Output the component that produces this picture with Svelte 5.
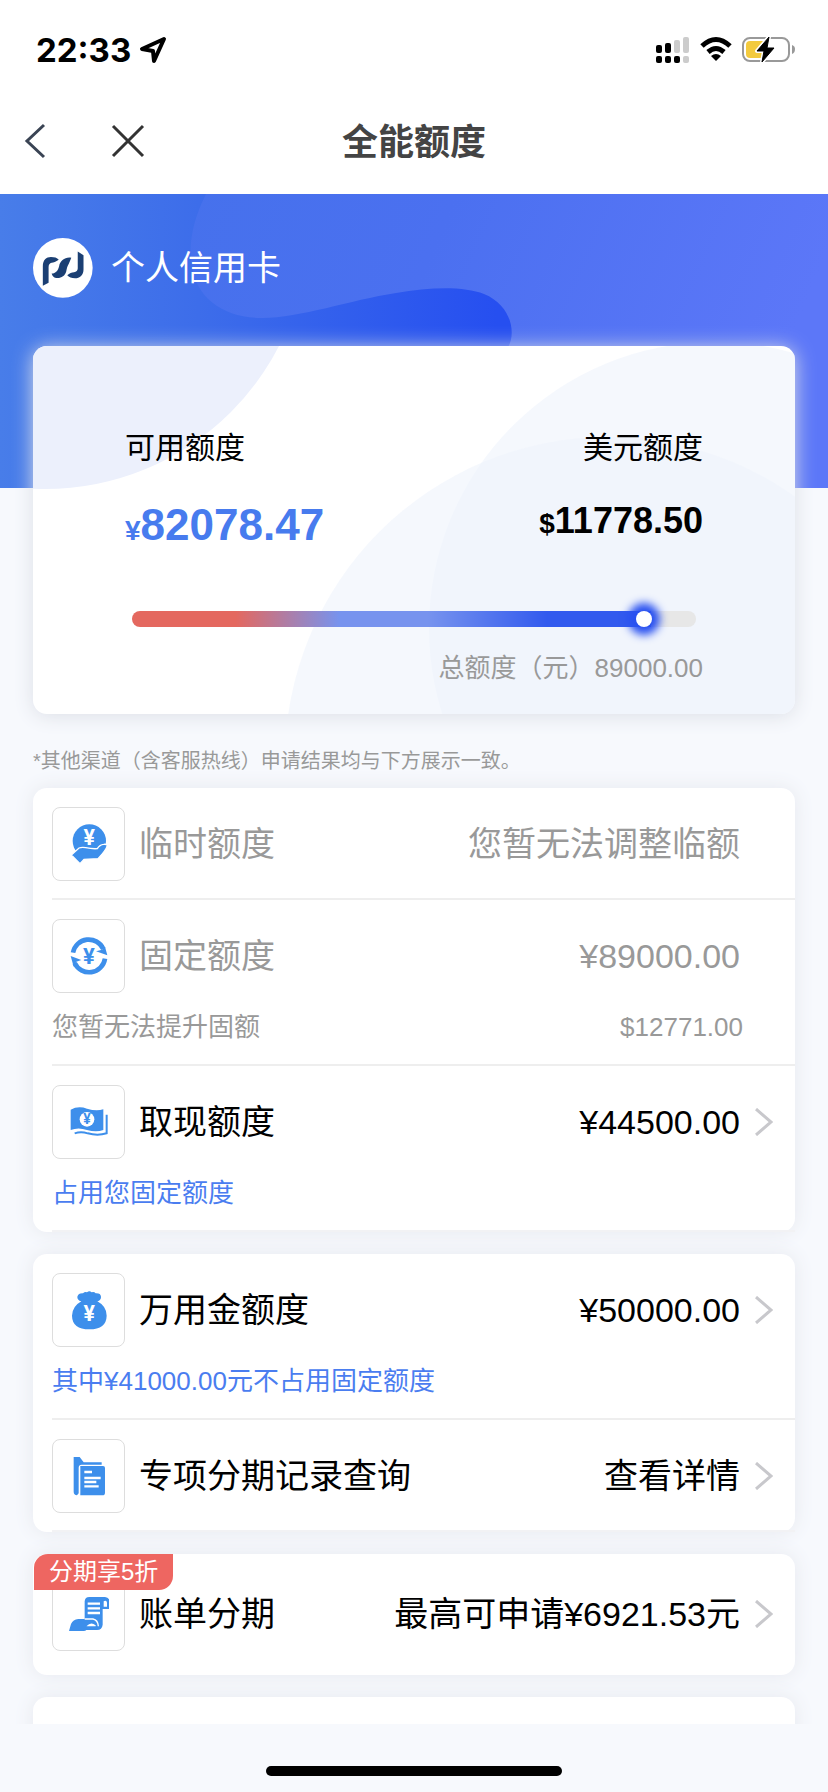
<script>
	const available = 82078.47;
	const total = 89000;
	const filled = Math.floor((available / total) * 100);

	const groups = [
		{
			items: [
				{ icon: 'hand', name: '临时额度', value: '您暂无法调整临额', muted: true },
				{
					icon: 'cycle',
					name: '固定额度',
					value: '¥89000.00',
					muted: true,
					note: '您暂无法提升固额',
					extra: '$12771.00'
				},
				{ icon: 'cash', name: '取现额度', value: '¥44500.00', note: '占用您固定额度' }
			]
		},
		{
			items: [
				{
					icon: 'bag',
					name: '万用金额度',
					value: '¥50000.00',
					note: '其中¥41000.00元不占用固定额度'
				},
				{ icon: 'folder', name: '专项分期记录查询', value: '查看详情' }
			]
		},
		{
			badge: '分期享5折',
			items: [{ icon: 'bill', name: '账单分期', value: '最高可申请¥6921.53元' }]
		}
	];
</script>

{#snippet icon(name)}
	<svg class="icon" viewBox="0 0 120 120" aria-hidden="true">
		{#if name === 'hand'}
			<circle cx="61" cy="51" r="50" />
			<text class="yen white" x="61" y="63" font-size="64">¥</text>
			<path
				class="cut"
				d="M7 93 L30 72 Q38 69 50 71 Q68 75 85 74 Q92 62 104 61 Q113 60 115 64 Q112 78 87 104 L45 106 L33 119 Z"
			/>
		{:else if name === 'cycle'}
			<path
				class="ring"
				d="M12 50 A48 48 0 0 1 103 39 M108 68 A48 48 0 0 1 17 81"
			/>
			<path d="M115 58 L81 46 L99 41 L108 32 Z M5 60 L37 72 L22 77 L14 92 Z" />
			<text class="yen" x="60" y="83" font-size="66">¥</text>
		{:else if name === 'cash'}
			<path d="M5 23 Q28 10 54 20 Q82 29 103 22 V84 Q82 92 54 84 Q28 75 5 84 Z" />
			<path class="line" d="M17 94 Q36 88 56 94 Q86 102 113 94 V38" />
			<circle class="white" cx="54" cy="52" r="22" />
			<text class="yen" x="54" y="67" font-size="42">¥</text>
		{:else if name === 'bag'}
			<path
				d="M37 34 Q24 30 25 20 Q28 9 42 10 Q48 4 54 7 Q61 1 68 7 Q75 4 80 10 Q95 9 96 20 Q97 30 85 34 Q113 49 113 77 Q112 118 61 118 Q10 118 9 77 Q10 49 37 34 Z"
			/>
			<text class="yen white" x="61" y="94" font-size="64">¥</text>
		{:else if name === 'folder'}
			<path d="M14 3 H32 L44 19 H98 V26 H38 Q29 26 29 35 V112 L24 118 Q14 117 14 107 Z" />
			<path d="M34 30 H102 Q108 30 108 36 V110 Q108 118 100 118 H34 Z" />
			<path class="slot" d="M46 48 H69 M46 66 H95 M46 78 H82 M46 91 H89" />
		{:else if name === 'bill'}
			<path
				d="M47 22 Q48 9 61 9 H108 Q122 10 122 26 V45 H101 V92 Q99 108 84 108 H52 Q50 111 44 111 H0 L6 90 Q12 76 28 75 H47 Z"
			/>
			<path class="slot" d="M56 29 H93 M56 43 H93 M56 57 H93" />
			<path class="white" d="M104 22 Q111 18 114 25 V38 H104 Z" />
			<path class="gap" d="M47 75 H72 Q87 78 88 97" />
			<path class="white" d="M53 96 Q66 82 80 94 V97 H53 Z" />
		{/if}
	</svg>
{/snippet}

<div class="app">
	<div class="status">
		<div class="clock">
			<span>22:33</span>
			<svg width="28" height="28" viewBox="0 0 28 28" aria-hidden="true">
				<path
					d="M25 3 L3 13 L14 15 L15 25 Z"
					fill="none"
					stroke="#000"
					stroke-width="4"
					stroke-linejoin="round"
				/>
			</svg>
		</div>
		<div class="signals">
			<svg width="34" height="28" viewBox="0 0 34 28" aria-hidden="true">
				<rect x="0" y="9" width="6" height="8" rx="2" />
				<rect x="9" y="7" width="6" height="10" rx="2" />
				<rect x="18" y="4" width="6" height="13" rx="2" fill="#ccc" />
				<rect x="27" y="1" width="6" height="16" rx="2" fill="#ccc" />
				<rect x="0" y="20" width="6" height="7" rx="2" />
				<rect x="9" y="20" width="6" height="7" rx="2" />
				<rect x="18" y="20" width="6" height="7" rx="2" />
				<rect x="27" y="20" width="6" height="7" rx="2" fill="#ccc" />
			</svg>
			<svg width="32" height="28" viewBox="0 0 32 28" aria-hidden="true">
				<g fill="none" stroke="#000" stroke-width="5">
					<path d="M2 10 Q16 -3 30 10" />
					<path d="M8 16 Q16 9 24 16" />
				</g>
				<path d="M11 20 Q16 16 21 20 L16 25 Z" />
			</svg>
			<svg width="54" height="28" viewBox="0 0 54 28" aria-hidden="true">
				<rect x="1" y="2" width="46" height="23" rx="7" fill="none" stroke="#999" stroke-width="2" />
				<path d="M50 9 Q53 10 53 13 Q53 17 50 18 Z" fill="#999" />
				<rect x="4" y="5" width="21" height="17" rx="4" fill="#f3ca3e" />
				<path
					d="M27 1 L15 15 H22 L20 26 L32 12 H25 Z"
					stroke="#fff"
					stroke-width="4"
					stroke-linejoin="round"
				/>
				<path d="M27 1 L15 15 H22 L20 26 L32 12 H25 Z" stroke="#000" stroke-linejoin="round" />
			</svg>
		</div>
	</div>

	<header class="nav">
		<div class="nav-buttons">
			<button type="button" aria-label="返回">
				<svg width="36" height="36" viewBox="0 0 36 36">
					<path d="M20 2 L3 18 L20 34" fill="none" stroke="#3a4454" stroke-width="3" />
				</svg>
			</button>
			<button type="button" aria-label="关闭">
				<svg width="36" height="36" viewBox="0 0 36 36">
					<path d="M3 3 L33 33 M33 3 L3 33" fill="none" stroke="#333" stroke-width="3" />
				</svg>
			</button>
		</div>
		<h1>全能额度</h1>
	</header>

	<main>
		<section class="hero">
			<svg class="waves" viewBox="0 0 828 294" preserveAspectRatio="none" aria-hidden="true">
				<defs>
					<linearGradient id="deep" x1="0" y1="0" x2="1" y2="0">
						<stop offset="0" stop-color="#487de9" />
						<stop offset="0.24" stop-color="#3d6dea" />
						<stop offset="0.6" stop-color="#264ff0" />
					</linearGradient>
					<linearGradient id="light" x1="0" y1="0" x2="1" y2="0.2">
						<stop offset="0" stop-color="#4671ec" />
						<stop offset="0.4" stop-color="#4b70f0" />
						<stop offset="1" stop-color="#5c77f8" />
					</linearGradient>
				</defs>
				<rect width="828" height="294" fill="url(#deep)" />
				<path
					d="M206 0 Q186 40 192 72 C196 104 224 124 262 124 C300 124 350 106 396 99 C430 93 464 92 484 100 C514 112 518 146 504 158 L480 294 H828 V0 Z"
					fill="url(#light)"
				/>
			</svg>
			<div class="owner">
				<svg class="logo" viewBox="9 9 177 177" aria-hidden="true">
					<circle cx="97" cy="97" r="88" fill="#fff" />
					<g fill="#1b3f73">
						<path
							d="M38 150 V92 C38 74 48 65 62 65 C72 65 80 67 85 73 C76 79 70 82 64 82 C58 83 55 88 55 95 V141 Z"
						/>
						<path
							d="M122 67 C119 75 117 78 115 84 C110 92 109 98 107 108 C103 122 91 129 77 127 C70 126 66 121 64 114 C76 113 83 105 86 92 C89 75 104 64 122 67 Z"
						/>
						<path
							d="M141 49 L158 60 V102 C158 119 147 128 133 128 C123 128 115 125 110 119 C117 113 123 110 130 110 C137 109 141 105 141 98 Z"
						/>
					</g>
				</svg>
				<span>个人信用卡</span>
			</div>
		</section>

		<section class="balance">
			<svg class="circles" viewBox="0 0 762 368" preserveAspectRatio="none" aria-hidden="true">
				<circle cx="12" cy="-120" r="263" fill="#ecf0fc" />
				<circle cx="682" cy="282" r="286" fill="#eef3fc" opacity="0.6" />
				<circle cx="575" cy="414" r="323" fill="#eef3fc" opacity="0.6" />
			</svg>
			<div class="amounts">
				<div>
					<p class="caption">可用额度</p>
					<p class="cny"><small>¥</small>82078.47</p>
				</div>
				<div class="right">
					<p class="caption">美元额度</p>
					<p class="usd"><small>$</small>11778.50</p>
				</div>
			</div>
			<input
				class="meter"
				type="range"
				min="0"
				max="100"
				value={filled}
				style="--filled: {filled}%"
				aria-label="可用额度"
			/>
			<p class="total">总额度（元）89000.00</p>
		</section>

		<p class="tip">*其他渠道（含客服热线）申请结果均与下方展示一致。</p>

		{#each groups as group}
			<ul class="group" class:tagged={group.badge}>
				{#if group.badge}
					<li class="badge">{group.badge}</li>
				{/if}
				{#each group.items as item}
					<li class="item" class:muted={item.muted}>
						<svelte:element
							this={item.muted ? 'div' : 'a'}
							class="row"
							href={item.muted ? undefined : '#' + item.icon}
						>
							<span class="icon-box">{@render icon(item.icon)}</span>
							<span class="name">{item.name}</span>
							<span class="value">{item.value}</span>
							<span class="arrow">
								{#if !item.muted}
									<svg width="18" height="28" viewBox="0 0 18 28" aria-hidden="true">
										<path d="M1 1 L16 14 L1 27" fill="none" stroke="#c8c8cc" stroke-width="3" />
									</svg>
								{/if}
							</span>
						</svelte:element>
						{#if item.note}
							<p class="note">
								<span>{item.note}</span>
								{#if item.extra}<span>{item.extra}</span>{/if}
							</p>
						{/if}
					</li>
				{/each}
			</ul>
		{/each}
		<div class="group next"></div>
	</main>

	<footer class="home"><span></span></footer>
</div>

<style>
	:global(body) {
		background: #f7f9fd;
	}

	.app {
		display: flex;
		flex-direction: column;
		height: 100vh;
		font-family: 'Liberation Sans', 'Noto Sans CJK SC', sans-serif;
		color: #000;
	}

	p,
	h1,
	ul {
		margin: 0;
		padding: 0;
		list-style: none;
	}

	.status {
		display: flex;
		flex: none;
		justify-content: space-between;
		align-items: center;
		height: 76px;
		padding: 12px 32px 0 36px;
		background: #fff;
	}

	.clock,
	.signals {
		display: flex;
		align-items: center;
	}

	.clock {
		gap: 8px;
		font: 700 33px/40px Inter, sans-serif;
	}

	.signals {
		gap: 10px;
	}

	.nav {
		display: grid;
		flex: none;
		grid-template-columns: 1fr auto 1fr;
		align-items: center;
		height: 106px;
		padding: 0 24px;
		background: #fff;
	}

	.nav-buttons {
		display: flex;
		gap: 50px;
	}

	button {
		display: flex;
		padding: 0;
		border: none;
		background: none;
	}

	h1 {
		padding-top: 3px;
		font-size: 36px;
		line-height: 48px;
		color: #444;
	}

	main {
		flex: 1;
		min-height: 0;
		overflow-y: auto;
		scrollbar-width: none;
	}

	.hero {
		position: relative;
		padding: 44px 33px 190px;
	}

	.waves,
	.circles {
		position: absolute;
		top: 0;
		left: 0;
		width: 100%;
		height: 100%;
	}

	.owner {
		position: relative;
		display: flex;
		align-items: center;
		gap: 18px;
		font-size: 34px;
		line-height: 60px;
		color: #fff;
	}

	.logo {
		width: 60px;
		height: 60px;
	}

	.balance {
		position: relative;
		margin: -142px 33px 0;
		padding: 82px 92px 28px;
		border-radius: 14px;
		background: #fff;
		box-shadow: 0 2px 20px #dcdfe6;
	}

	.circles {
		border-radius: 14px;
	}

	.amounts,
	.meter,
	.total {
		position: relative;
	}

	.amounts {
		display: flex;
		justify-content: space-between;
	}

	.right,
	.total {
		text-align: right;
	}

	.caption {
		margin-bottom: 31px;
		font-size: 30px;
		line-height: 40px;
	}

	.cny {
		font-size: 44px;
		font-weight: 700;
		line-height: 52px;
		color: #477bee;
	}

	.usd {
		font-size: 36px;
		font-weight: 700;
		line-height: 44px;
	}

	small {
		font-size: 28px;
		line-height: 1;
	}

	.meter {
		display: block;
		width: calc(100% - 14px);
		height: 16px;
		margin: 60px 7px 23px;
		border-radius: 8px;
		appearance: none;
		background:
			linear-gradient(90deg, #e4685f 20%, #7793ee 40%, #7793ee 57%, #325aee 80%) 0 0 / var(--filled)
				100% no-repeat,
			#e7e7e7;
	}

	.meter::-webkit-slider-thumb {
		width: 16px;
		height: 16px;
		border-radius: 50%;
		appearance: none;
		background: #fff;
		box-shadow: 0 0 8px 8px #2850f0;
	}

	.total {
		font-size: 26px;
		line-height: 36px;
		color: #999;
	}

	.tip {
		margin: 32px 33px 12px;
		font-size: 20px;
		line-height: 30px;
		color: #999;
	}

	.group {
		position: relative;
		margin: 0 33px 22px;
		border-radius: 14px;
		background: #fff;
		box-shadow: 0 0 20px #e6e8ee;
	}

	.item {
		margin-left: 19px;
		padding: 19px 0 17px;
		border-bottom: 2px solid #eee;
	}

	.item:last-child {
		border-bottom-color: #f2f2f4;
	}

	.tagged .item {
		padding: 23px 0 24px;
		border-bottom: none;
	}

	.row {
		display: flex;
		align-items: center;
		font-size: 34px;
		line-height: 48px;
		color: #000;
		text-decoration: none;
	}

	.muted .row {
		color: #999;
	}

	.icon-box {
		display: grid;
		box-sizing: border-box;
		width: 73px;
		height: 74px;
		margin-right: 14px;
		border: 1px solid #ddd;
		border-radius: 8px;
		place-items: center;
	}

	.icon {
		width: 40px;
		height: 40px;
		fill: #3d8feb;
	}

	.icon .cut {
		stroke: #fff;
		stroke-width: 4;
	}

	.icon .ring,
	.icon .line,
	.icon .slot,
	.icon .gap {
		fill: none;
		stroke: #3d8feb;
		stroke-width: 14;
	}

	.icon .line {
		stroke-width: 6;
	}

	.icon .slot {
		stroke: #fff;
		stroke-width: 7;
	}

	.icon .gap {
		stroke: #fff;
		stroke-width: 4;
	}

	.icon .white {
		fill: #fff;
	}

	.yen {
		font-family: Roboto, sans-serif;
		font-weight: 700;
		text-anchor: middle;
	}

	.value {
		margin-left: auto;
	}

	.arrow {
		display: flex;
		width: 18px;
		margin: 0 22px 0 15px;
	}

	.note {
		display: flex;
		justify-content: space-between;
		margin-top: 16px;
		padding: 0 52px 2px 0;
		font-size: 26px;
		line-height: 36px;
		color: #4a7df0;
	}

	.muted .note {
		color: #999;
	}

	.badge {
		position: absolute;
		top: 0;
		left: 1px;
		z-index: 1;
		padding: 0 15px;
		border-radius: 14px 0;
		background: #ee6661;
		font-size: 24px;
		line-height: 36px;
		color: #fff;
	}

	.next {
		min-height: 120px;
	}

	.home {
		display: flex;
		flex: none;
		justify-content: center;
		padding: 42px 0 16px;
	}

	.home span {
		width: 296px;
		height: 10px;
		border-radius: 5px;
		background: #000;
	}
</style>
